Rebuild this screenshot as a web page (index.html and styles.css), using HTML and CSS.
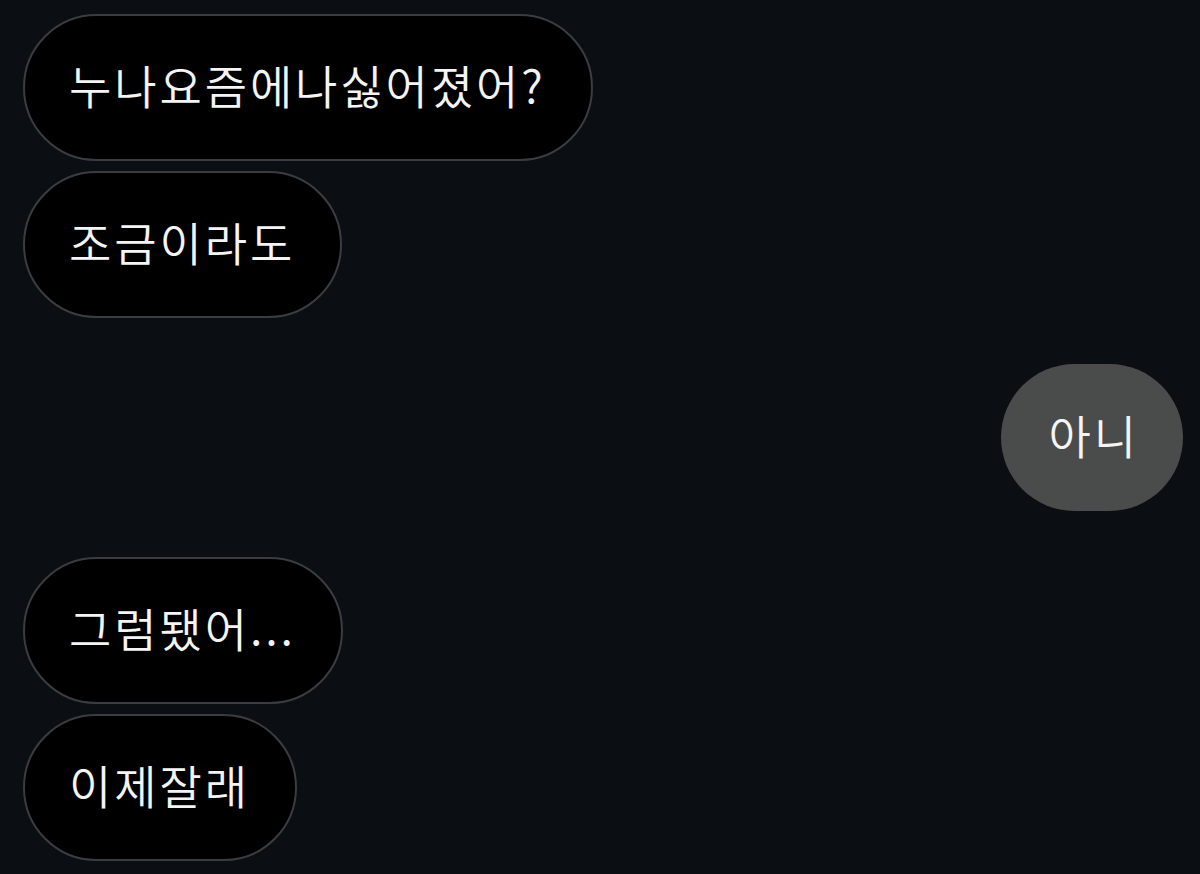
FILE: index.html
```html
<!DOCTYPE html>
<html lang="ko">
<head>
<meta charset="utf-8">
<link rel="stylesheet" href="styles.css">
</head>
<body>
<div class="chat">
  <div class="group in">
    <div class="bubble">누나요즘에나싫어졌어?</div>
    <div class="bubble">조금이라도</div>
  </div>
  <div class="group out">
    <div class="bubble">아니</div>
  </div>
  <div class="group in">
    <div class="bubble">그럼됐어...</div>
    <div class="bubble">이제잘래</div>
  </div>
</div>
</body>
</html>
```
FILE: styles.css
```css
html, body {
  margin: 0;
  padding: 0;
  background: #0b0f14;
}
.chat {
  width: 1200px;
  height: 874px;
  box-sizing: border-box;
  padding: 14px 17px 0 23px;
  display: flex;
  flex-direction: column;
  gap: 46px;
  font-family: "Noto Sans CJK KR", "Noto Sans", sans-serif;
}
.group {
  display: flex;
  flex-direction: column;
  gap: 10px;
}
.group.in {
  align-items: flex-start;
}
.group.out {
  align-items: flex-end;
}
.bubble {
  height: 147px;
  box-sizing: border-box;
  display: flex;
  align-items: center;
  padding: 0 45px 8px 44px;
  border-radius: 74px;
  font-size: 46px;
  font-weight: 350;
  letter-spacing: 2.9px;
  color: #f4f4f4;
  white-space: nowrap;
}
.in .bubble {
  background: #000000;
  border: 2.5px solid #3a3d40;
}
.out .bubble {
  background: #4a4b4b;
  padding: 0 44px 8px 48px;
}
```
